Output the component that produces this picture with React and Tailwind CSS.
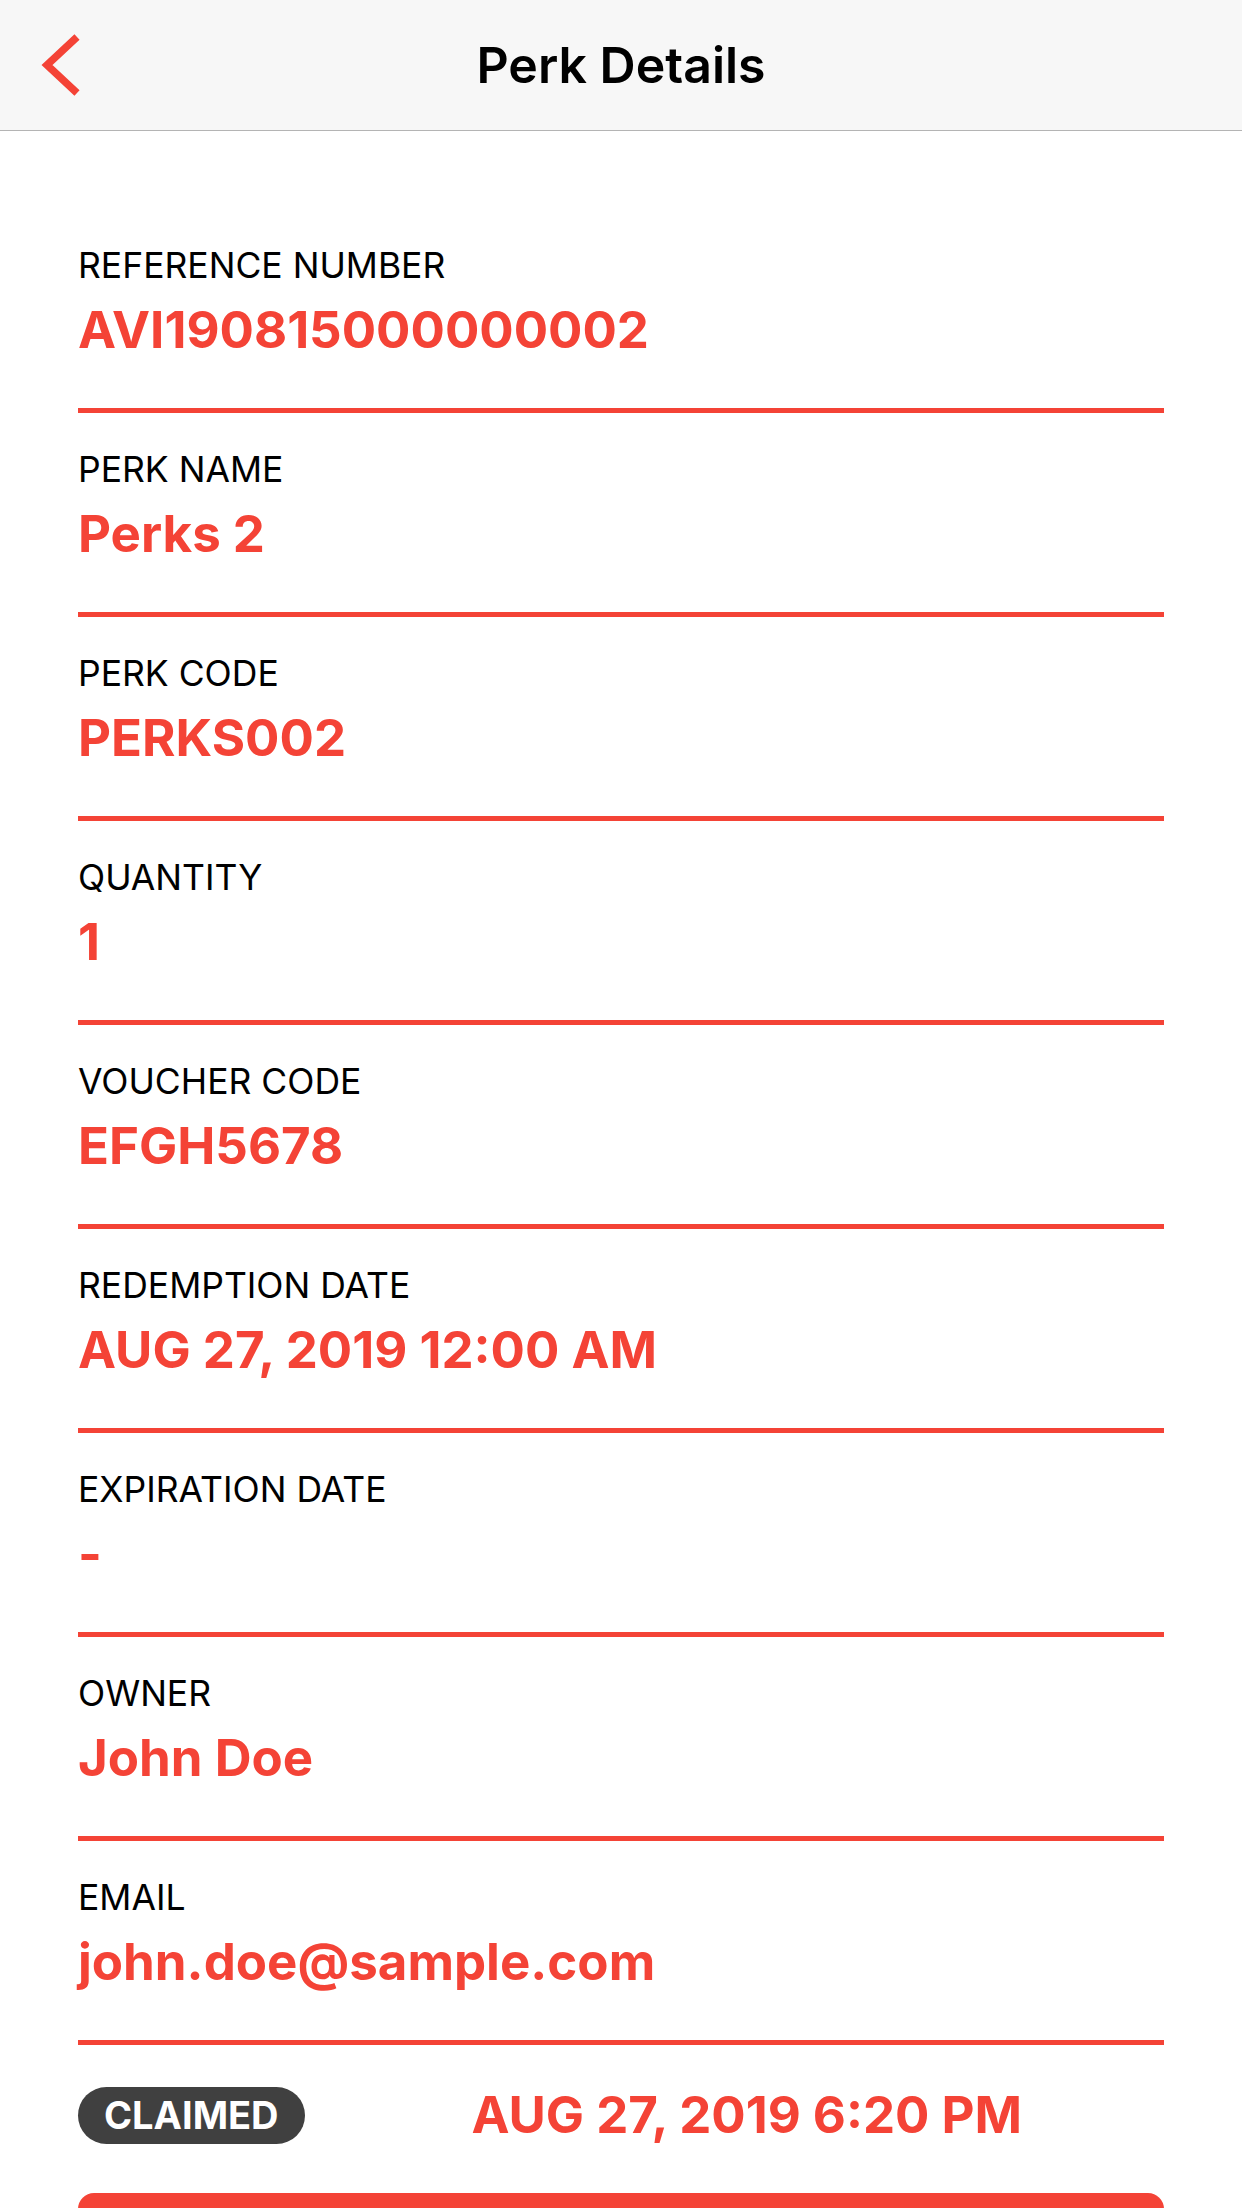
import React from "react";

const rows = [
  { label: "REFERENCE NUMBER", value: "AVI190815000000002" },
  { label: "PERK NAME", value: "Perks 2" },
  { label: "PERK CODE", value: "PERKS002" },
  { label: "QUANTITY", value: "1" },
  { label: "VOUCHER CODE", value: "EFGH5678" },
  { label: "REDEMPTION DATE", value: "AUG 27, 2019 12:00 AM" },
  { label: "EXPIRATION DATE", value: "-" },
  { label: "OWNER", value: "John Doe" },
  { label: "EMAIL", value: "john.doe@sample.com" },
];

function BackIcon() {
  return (
    <svg width="50" height="72" viewBox="0 0 50 72" fill="none">
      <path d="M37 8 L7 36 L37 64" stroke="#f44336" strokeWidth="7.5" strokeLinejoin="miter" />
    </svg>
  );
}

function DetailRow({ label, value }) {
  return (
    <div className="flex flex-col border-b-[5px] border-[#f44336] pt-[36px] pb-[48px]">
      <span className="text-[35.5px] leading-[42px] text-black">{label}</span>
      <span className="mt-[13px] text-[51px] leading-[60px] font-bold text-[#f44336]">{value}</span>
    </div>
  );
}

export default function App() {
  return (
    <div className="min-h-screen w-full bg-white font-['Inter','Noto_Sans',sans-serif]">
      {/* nav bar */}
      <header className="grid h-[131px] grid-cols-[1fr_auto_1fr] items-center border-b border-[#b4b4b4] bg-[#f7f7f7]">
        <div className="flex items-center pl-[40px]">
          <BackIcon />
        </div>
        <h1 className="text-[50px] leading-[60px] font-semibold text-black">Perk Details</h1>
        <div />
      </header>

      <main className="px-[78px] pt-[78px]">
        {rows.map((r) => (
          <DetailRow key={r.label} label={r.label} value={r.value} />
        ))}

        <div className="flex items-center pt-[40px]">
          <span className="flex h-[57px] items-center rounded-full bg-[#404040] px-[26px] text-[38px] font-bold text-white">
            CLAIMED
          </span>
          <span className="ml-[25px] flex-1 text-center text-[51px] leading-[60px] font-bold text-[#f44336]">
            AUG 27, 2019 6:20 PM
          </span>
        </div>

        <button className="mt-[48px] h-[90px] w-full rounded-[16px] bg-[#f44336]" />
      </main>
    </div>
  );
}
